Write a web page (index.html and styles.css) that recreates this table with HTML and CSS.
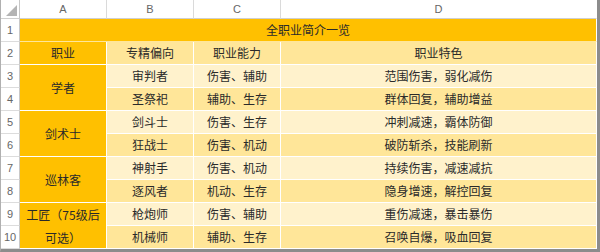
FILE: index.html
```html
<!DOCTYPE html>
<html lang="zh">
<head>
<meta charset="utf-8">
<link rel="stylesheet" href="styles.css">
</head>
<body>
<div class="frame">
  <div class="sheet">
    <div class="hd corner"><svg width="18" height="18" viewBox="0 0 18 18"><polygon points="16,5 16,16 5,16" fill="#b4b4b4"/></svg></div>
    <div class="hd col">A</div>
    <div class="hd col">B</div>
    <div class="hd col">C</div>
    <div class="hd col last">D</div>

    <div class="rn">1</div>
    <div class="c title">全职业简介一览</div>

    <div class="rn">2</div>
    <div class="c org">职业</div>
    <div class="c dk">专精偏向</div>
    <div class="c dk">职业能力</div>
    <div class="c dk">职业特色</div>

    <div class="rn">3</div>
    <div class="c org span2">学者</div>
    <div class="c lt">审判者</div>
    <div class="c lt">伤害、辅助</div>
    <div class="c lt">范围伤害，弱化减伤</div>

    <div class="rn">4</div>
    <div class="c dk">圣祭祀</div>
    <div class="c dk">辅助、生存</div>
    <div class="c dk">群体回复，辅助增益</div>

    <div class="rn">5</div>
    <div class="c org span2">剑术士</div>
    <div class="c lt">剑斗士</div>
    <div class="c lt">伤害、生存</div>
    <div class="c lt">冲刺减速，霸体防御</div>

    <div class="rn">6</div>
    <div class="c dk">狂战士</div>
    <div class="c dk">伤害、机动</div>
    <div class="c dk">破防斩杀，技能刷新</div>

    <div class="rn">7</div>
    <div class="c org span2">巡林客</div>
    <div class="c lt">神射手</div>
    <div class="c lt">伤害、机动</div>
    <div class="c lt">持续伤害，减速减抗</div>

    <div class="rn">8</div>
    <div class="c dk">逐风者</div>
    <div class="c dk">机动、生存</div>
    <div class="c dk">隐身增速，解控回复</div>

    <div class="rn">9</div>
    <div class="c org span2 wrap">工匠（75级后<br>可选）</div>
    <div class="c lt">枪炮师</div>
    <div class="c lt">伤害、辅助</div>
    <div class="c lt">重伤减速，暴击暴伤</div>

    <div class="rn">10</div>
    <div class="c dk">机械师</div>
    <div class="c dk">辅助、生存</div>
    <div class="c dk">召唤自爆，吸血回复</div>
  </div>
</div>
</body>
</html>
```
FILE: styles.css
```css
* { box-sizing: border-box; }
html, body { margin: 0; padding: 0; background: #ffffff; }
body {
  width: 600px;
  height: 252px;
  overflow: hidden;
  font-family: "Noto Sans CJK SC", "Liberation Sans", sans-serif;
}
.frame {
  width: 600px;
  height: 252px;
  border-left: 1px solid #b0b0b0;
  border-right: 3px solid #8c8c8c;
  border-bottom: 3px solid #8c8c8c;
  background: #ffffff;
}
.sheet {
  display: grid;
  grid-template-columns: 19px 87px 87px 87px 316px;
  grid-template-rows: 19px repeat(10, 23px);
}
.hd {
  background: #ffffff;
  border-right: 1px solid #dadada;
  border-bottom: 1px solid #cfcfcf;
  color: #666666;
  font-family: "Liberation Sans", "Noto Sans", sans-serif;
  font-size: 11px;
  display: flex;
  align-items: center;
  justify-content: center;
}
.hd.last { border-right: 1px solid #ffffff; }
.corner { padding: 0; border-right-color: #c8c8c8; }
.corner svg { display: block; }
.rn {
  background: #ffffff;
  border-right: 1px solid #c8c8c8;
  border-bottom: 1px solid #dcdcdc;
  color: #666666;
  font-family: "Liberation Sans", "Noto Sans", sans-serif;
  font-size: 11px;
  display: flex;
  align-items: center;
  justify-content: center;
}
.c {
  border-right: 1px solid #ffffff;
  border-bottom: 1px solid #ffffff;
  color: #2a2a2a;
  font-size: 12px;
  line-height: 14px;
  display: flex;
  align-items: center;
  justify-content: center;
  text-align: center;
  white-space: nowrap;
}
.title {
  grid-column: 2 / span 4;
  background: #ffc000;
  border-bottom-color: #ffe699;
}
.org { background: #ffc000; }
.dk { background: #ffe699; }
.lt { background: #fff2cc; }
.span2 { grid-row: span 2; }
.wrap { line-height: 23px; }
```
